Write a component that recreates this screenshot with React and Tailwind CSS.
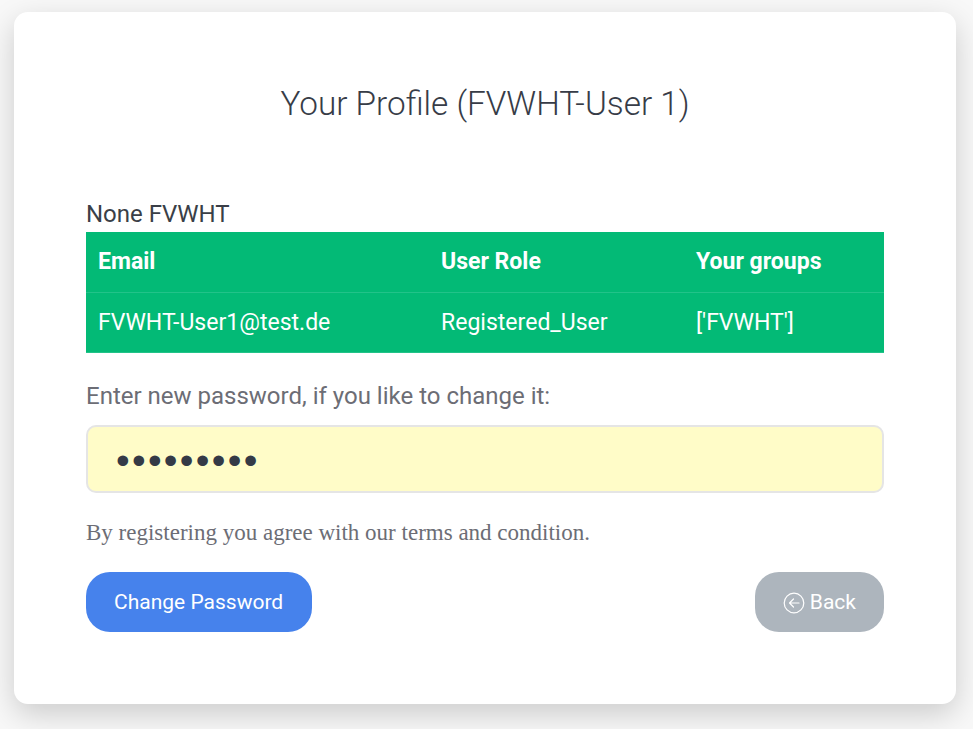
import React from 'react';

const App = () => {
  return (
    <div className="min-h-[729px] bg-[#f8f8f8] px-[14px] pt-[12px] font-['Roboto',sans-serif]">
      <div className="h-[692px] w-[942px] rounded-[14px] bg-white px-[72px] shadow-[0_10px_30px_rgba(0,0,0,0.18)]">
        {/* Title */}
        <h1 className="pt-[70px] text-center text-[33.3px] leading-[44px] font-light text-[#373c47]">
          Your Profile (FVWHT-User 1)
        </h1>

        <p className="mt-[71px] mb-[1px] text-[24px] leading-[34px] text-[#3a3f47]">None FVWHT</p>

        {/* Table */}
        <table className="w-full table-fixed bg-[#03ba76] text-[23.04px] text-white">
          <thead>
            <tr className="h-[60px] border-b border-[#22c389]">
              <th className="w-[343px] px-3 pt-[2px] text-left font-bold">Email</th>
              <th className="w-[255px] px-3 pt-[2px] text-left font-bold">User Role</th>
              <th className="px-3 pt-[2px] text-left font-bold">Your groups</th>
            </tr>
          </thead>
          <tbody>
            <tr className="h-[60px] border-b border-[#22c389]">
              <td className="px-3 pt-[2px]">FVWHT-User1@test.de</td>
              <td className="px-3 pt-[2px]">Registered_User</td>
              <td className="px-3 pt-[2px]">['FVWHT']</td>
            </tr>
          </tbody>
        </table>

        {/* Password */}
        <label className="mt-[26px] block text-[24px] leading-[34px] text-[#6c6d75]">
          Enter new password, if you like to change it:
        </label>
        <input
          type="password"
          readOnly
          value="123456789"
          className="mt-[12px] block h-[68px] w-full rounded-[10px] border-2 border-[#e5e5e5] bg-[#fffcc8] px-[28px] pt-[4px] font-['Liberation_Sans',sans-serif] text-[39px] tracking-[2.3px] text-[#343a46] outline-none"
        />

        <p className="mt-[24px] font-['Liberation_Serif',serif] text-[23px] leading-[32px] text-[#6c6d75]">
          By registering you agree with our terms and condition.
        </p>

        {/* Buttons */}
        <div className="mt-[23px] flex items-center justify-between">
          <button className="h-[60px] rounded-[24px] bg-[#4682ec] pt-[2px] pr-[29px] pl-[28px] text-[21px] text-white">
            Change Password
          </button>
          <button className="flex h-[60px] items-center gap-[5px] rounded-[24px] bg-[#adb5bd] px-[28px] pt-[2px] text-[21px] text-white">
            <svg width="22" height="22" viewBox="0 0 22 22" fill="none" stroke="currentColor" strokeWidth="1.2" strokeLinecap="round" strokeLinejoin="round">
              <circle cx="11" cy="11" r="9.8" />
              <path d="M16 11H6.5M10.5 7l-4 4 4 4" />
            </svg>
            Back
          </button>
        </div>
      </div>
    </div>
  );
};

export default App;
